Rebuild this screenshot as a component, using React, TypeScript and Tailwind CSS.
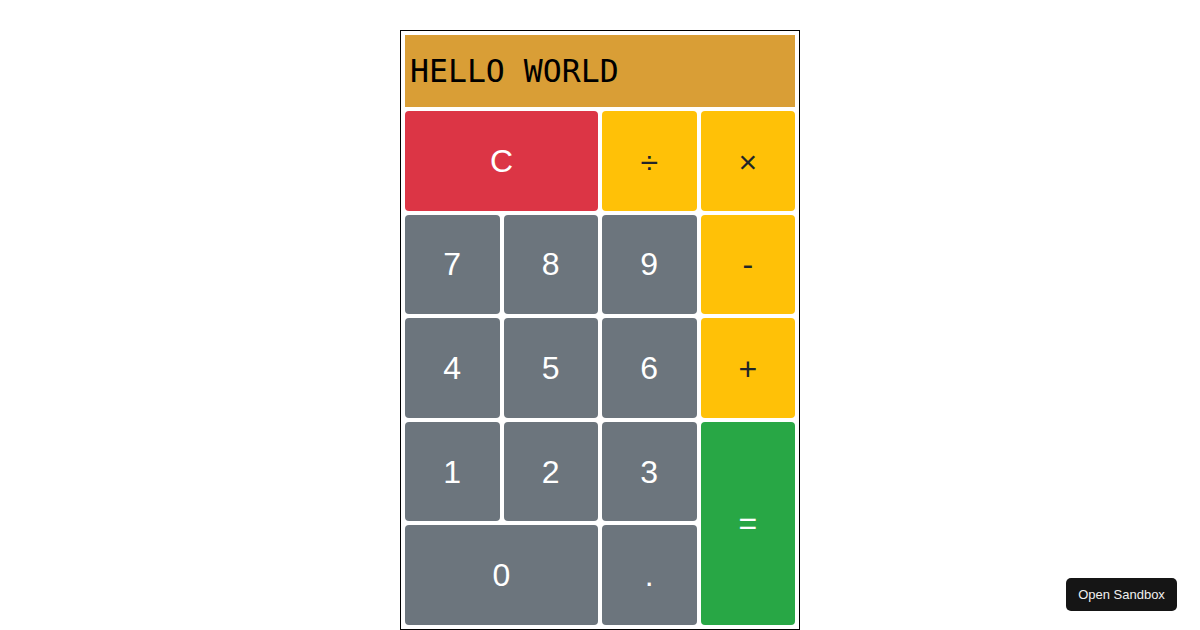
import React from "react";

type Btn = { label: string; cls: string; span?: string };

const gray = "bg-[#6c757d] text-white";
const yellow = "bg-[#ffc107] text-[#212529]";

const buttons: Btn[] = [
  { label: "C", cls: "bg-[#dc3545] text-white", span: "col-span-2" },
  { label: "÷", cls: yellow + " pt-[3px]" },
  { label: "×", cls: yellow + " pt-[3px]" },
  { label: "7", cls: gray },
  { label: "8", cls: gray },
  { label: "9", cls: gray },
  { label: "-", cls: yellow },
  { label: "4", cls: gray },
  { label: "5", cls: gray },
  { label: "6", cls: gray },
  { label: "+", cls: yellow + " pt-[3px]" },
  { label: "1", cls: gray },
  { label: "2", cls: gray },
  { label: "3", cls: gray },
  { label: "=", cls: "bg-[#28a745] text-white", span: "row-span-2" },
  { label: "0", cls: gray, span: "col-span-2" },
  { label: ".", cls: gray },
];

export default function App() {
  return (
    <div className="relative w-[1200px] h-[630px] bg-white overflow-hidden">
      <div className="mx-auto mt-[30px] w-[400px] h-[600px] border border-black pl-[4px] pr-[4px] pt-[4px] pb-[4px] flex flex-col gap-[4px]">
        <div className="h-[72px] bg-[#d99e36] flex items-center pl-[5px] pt-[2px] text-[31.5px] text-black font-['DejaVu_Sans_Mono',monospace]">
          HELLO WORLD
        </div>
        <div className="flex-1 grid grid-cols-4 grid-rows-5 gap-[4px]">
          {buttons.map((b, i) => (
            <div
              key={i}
              className={`${b.cls} ${b.span ?? ""} rounded-[4px] flex items-center justify-center text-[32px] font-['Liberation_Sans',Arial,sans-serif]`}
            >
              {b.label}
            </div>
          ))}
        </div>
      </div>
      <div className="absolute right-[23px] bottom-[19px] w-[111px] h-[33px] rounded-[5px] bg-[#151515] text-[#f0f0f0] text-[13px] flex items-center justify-center font-['Liberation_Sans',Arial,sans-serif]">
        Open Sandbox
      </div>
    </div>
  );
}
